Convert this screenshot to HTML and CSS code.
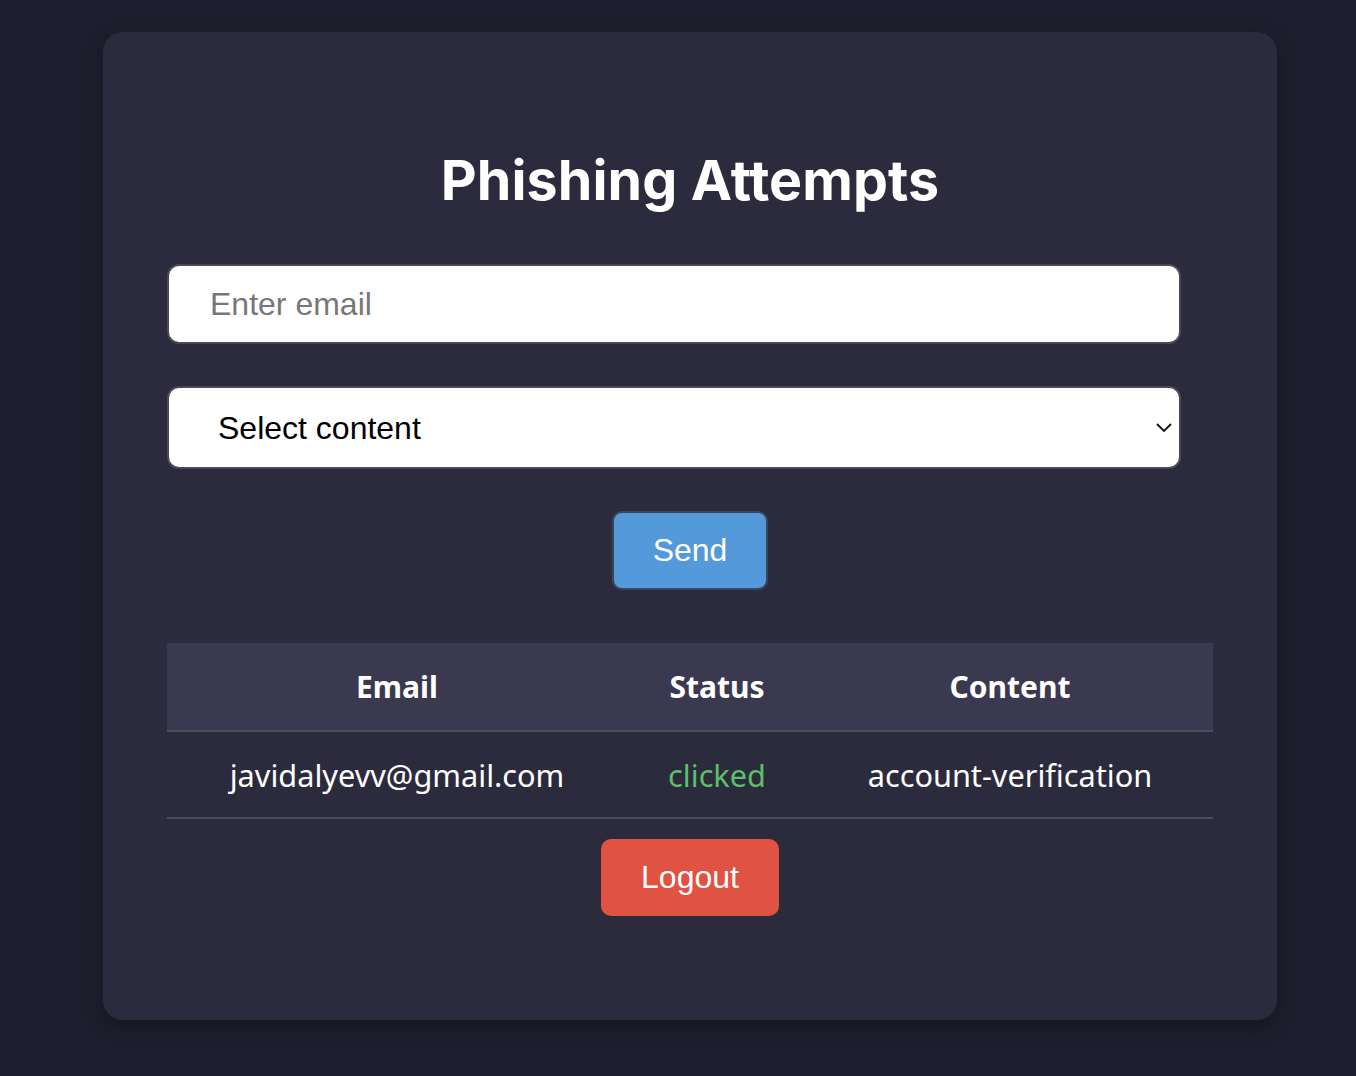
FILE: index.html
```html
<!DOCTYPE html>
<html lang="en">
<head>
<meta charset="utf-8">
<title>Phishing Attempts</title>
<link rel="stylesheet" href="styles.css">
</head>
<body>
<div class="card">
  <h1 class="title">Phishing Attempts</h1>
  <input class="field email-input" type="text" placeholder="Enter email">
  <div class="select-wrap">
    <select class="field select">
      <option>Select content</option>
    </select>
    <svg class="chevron" width="18" height="12" viewBox="0 0 18 12"><path d="M2 3 L9 10 L16 3" fill="none" stroke="#111" stroke-width="1.8"/></svg>
  </div>
  <div class="center">
    <button class="btn send">Send</button>
  </div>
  <table class="table">
    <thead>
      <tr><th class="c-email">Email</th><th class="c-status">Status</th><th class="c-content">Content</th></tr>
    </thead>
    <tbody>
      <tr><td>javidalyevv@gmail.com</td><td class="clicked">clicked</td><td>account-verification</td></tr>
    </tbody>
  </table>
  <div class="center">
    <button class="btn logout">Logout</button>
  </div>
</div>
</body>
</html>
```

FILE: styles.css
```css
html, body {
  margin: 0;
  padding: 0;
}
body {
  background: #1f1e2e;
  min-height: 1076px;
  padding-top: 32px;
  box-sizing: border-box;
  font-family: "Liberation Sans", Arial, sans-serif;
}
.card {
  width: 1174px;
  height: 988px;
  margin: 0 0 0 103px;
  box-sizing: border-box;
  padding: 114px 64px 0 64px;
  background: #2c2b3d;
  border-radius: 20px;
  box-shadow: 0 6px 20px rgba(0, 0, 0, 0.35);
  display: flex;
  flex-direction: column;
  align-items: flex-start;
}
.title {
  margin: 0;
  width: 100%;
  text-align: center;
  font-family: Inter, "Noto Sans", sans-serif;
  font-weight: 700;
  font-size: 55.5px;
  line-height: 68px;
  color: #ffffff;
  letter-spacing: 0.1px;
  font-variant-ligatures: none;
  font-feature-settings: "liga" 0, "calt" 0;
}
.field {
  width: 1014px;
  box-sizing: border-box;
  background: #ffffff;
  border: 2px solid #4a4a55;
  border-radius: 12px;
  font-family: "Liberation Sans", Arial, sans-serif;
  font-size: 32px;
  outline: none;
}
.email-input {
  margin-top: 50px;
  height: 80px;
  padding: 0 0 0 41px;
  color: #222;
}
.email-input::placeholder {
  color: #777777;
}
.select-wrap {
  position: relative;
  margin-top: 42px;
}
.select {
  -webkit-appearance: none;
  appearance: none;
  height: 83px;
  padding: 0 0 0 49px;
  color: #000;
}
.chevron {
  position: absolute;
  right: 8px;
  top: 35px;
}
.center {
  width: 100%;
  display: flex;
  justify-content: center;
}
.btn {
  font-family: "Liberation Sans", Arial, sans-serif;
  font-size: 32px;
  color: #ffffff;
  border-radius: 10px;
  cursor: pointer;
}
.send {
  margin-top: 42px;
  width: 156px;
  height: 79px;
  background: #5499d9;
  border: 2px solid #3b4560;
  padding: 0;
}
.table {
  margin-top: 53px;
  width: 1046px;
  border-collapse: collapse;
  font-family: "Noto Sans", "Open Sans", sans-serif;
  color: #ffffff;
}
.table th {
  background: #3a394f;
  height: 87px;
  padding: 0;
  font-size: 30px;
  font-weight: 700;
  text-align: center;
  border-bottom: 2px solid #4d4c5a;
}
.c-email { width: 460px; }
.c-status { width: 180px; }
.c-content { width: 406px; }
.table td {
  height: 85px;
  padding: 0;
  font-size: 30.7px;
  text-align: center;
  border-bottom: 2px solid #4d4c5a;
}
.table td.clicked {
  color: #5cbf6a;
}
.logout {
  margin-top: 20px;
  width: 178px;
  height: 77px;
  background: #e05242;
  border: none;
  padding: 0;
}
```
